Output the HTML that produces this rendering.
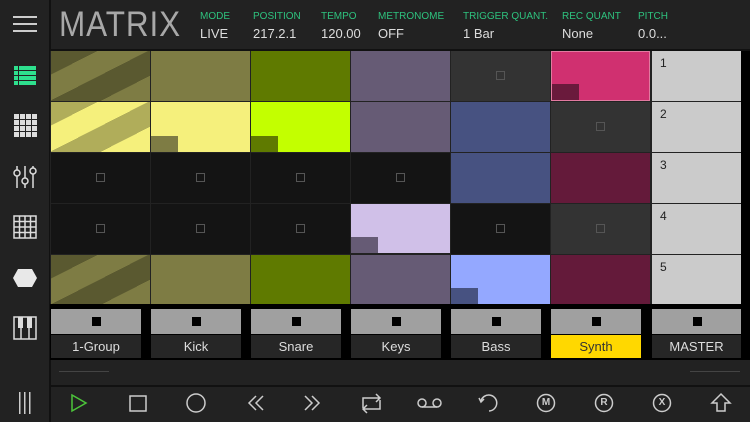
<!DOCTYPE html>
<html><head><meta charset="utf-8">
<style>
*{margin:0;padding:0;box-sizing:border-box}
body{width:750px;height:422px;overflow:hidden;background:#0a0a0a;font-family:"Liberation Sans",sans-serif;position:relative}
.a{position:absolute}
.lbl{position:absolute;top:11px;font-size:10px;color:#2ec27e;white-space:nowrap}
.val{position:absolute;top:26px;font-size:13px;color:#ddd;white-space:nowrap}
.c{position:absolute;width:99px;height:50px}
.sq{position:absolute;left:45px;top:20px;width:9px;height:9px;border:1px solid #555}
.mk{position:absolute;left:0;bottom:0;width:27px;height:16px}
.sc{position:absolute;left:652px;width:89px;height:50px;background:#cbcbcb;color:#222;font-size:12px;padding:5px 0 0 8px}
.tb{position:absolute;top:309px;width:90px;height:25px;background:#a0a0a0}
.tb i{position:absolute;left:41px;top:8px;width:9px;height:9px;background:#000}
.tl{position:absolute;top:335px;width:90px;height:23px;background:#262626;color:#ddd;font-size:13px;text-align:center;line-height:24px}
</style></head><body>
<div class="a" style="left:0;top:0;width:750px;height:49px;background:#222"></div>
<div class="a" style="left:0;top:49px;width:750px;height:2px;background:#111"></div>
<div class="a" style="left:0;top:0;width:49px;height:422px;background:#222"></div>
<div class="a" style="left:49px;top:0;width:2px;height:422px;background:#111"></div>
<div class="a" style="left:13px;top:16px;width:24px;height:2px;background:#ccc"></div>
<div class="a" style="left:13px;top:23px;width:24px;height:2px;background:#ccc"></div>
<div class="a" style="left:13px;top:30px;width:24px;height:2px;background:#ccc"></div>
<div class="a" style="left:59px;top:5px;font-size:35px;color:#a8a8a8;letter-spacing:1px;transform:scaleX(0.9);transform-origin:left">MATRIX</div>
<div class="lbl" style="left:200px">MODE</div><div class="val" style="left:200px">LIVE</div>
<div class="lbl" style="left:253px">POSITION</div><div class="val" style="left:253px">217.2.1</div>
<div class="lbl" style="left:321px">TEMPO</div><div class="val" style="left:321px">120.00</div>
<div class="lbl" style="left:378px">METRONOME</div><div class="val" style="left:378px">OFF</div>
<div class="lbl" style="left:463px">TRIGGER QUANT.</div><div class="val" style="left:463px">1 Bar</div>
<div class="lbl" style="left:562px">REC QUANT</div><div class="val" style="left:562px">None</div>
<div class="lbl" style="left:638px">PITCH</div><div class="val" style="left:638px">0.0...</div>
<svg class="a" style="left:0;top:50px" width="49" height="372">
 <g fill="#2ee08e">
  <rect x="14" y="16" width="4" height="4"/><rect x="19" y="16" width="17" height="4"/>
  <rect x="14" y="21" width="4" height="4"/><rect x="19" y="21" width="17" height="4"/>
  <rect x="14" y="26" width="4" height="4"/><rect x="19" y="26" width="17" height="4"/>
  <rect x="14" y="31" width="4" height="4"/><rect x="19" y="31" width="17" height="4"/>
 </g>
 <g fill="#ddd">
  <rect x="14" y="64" width="5" height="5"/><rect x="20" y="64" width="5" height="5"/><rect x="26" y="64" width="5" height="5"/><rect x="32" y="64" width="5" height="5"/>
  <rect x="14" y="70" width="5" height="5"/><rect x="20" y="70" width="5" height="5"/><rect x="26" y="70" width="5" height="5"/><rect x="32" y="70" width="5" height="5"/>
  <rect x="14" y="76" width="5" height="5"/><rect x="20" y="76" width="5" height="5"/><rect x="26" y="76" width="5" height="5"/><rect x="32" y="76" width="5" height="5"/>
  <rect x="14" y="82" width="5" height="5"/><rect x="20" y="82" width="5" height="5"/><rect x="26" y="82" width="5" height="5"/><rect x="32" y="82" width="5" height="5"/>
 </g>
 <g stroke="#ddd" stroke-width="1.5" fill="none">
  <line x1="17" y1="116" x2="17" y2="138"/><line x1="25" y1="116" x2="25" y2="138"/><line x1="33" y1="116" x2="33" y2="138"/>
  <circle cx="17" cy="123" r="3" fill="#222"/><circle cx="25" cy="131" r="3" fill="#222"/><circle cx="33" cy="121" r="3" fill="#222"/>
  <rect x="14" y="166" width="22" height="22"/>
  <line x1="14" y1="171.5" x2="36" y2="171.5"/><line x1="14" y1="177" x2="36" y2="177"/><line x1="14" y1="182.5" x2="36" y2="182.5"/>
  <line x1="19.5" y1="166" x2="19.5" y2="188"/><line x1="25" y1="166" x2="25" y2="188"/><line x1="30.5" y1="166" x2="30.5" y2="188"/>
  <rect x="14" y="267" width="22" height="22"/>
  <line x1="21" y1="278" x2="21" y2="289"/><line x1="29" y1="278" x2="29" y2="289"/>
 </g>
 <polygon points="18,219 32,219 37,228 32,237 18,237 13,228" fill="#e8e8e8"/>
 <g fill="#ddd"><rect x="18" y="267" width="5" height="11"/><rect x="27" y="267" width="5" height="11"/></g>
 <g fill="#ccc"><rect x="19" y="342" width="1.5" height="22"/><rect x="24" y="342" width="1.5" height="22"/><rect x="29" y="342" width="1.5" height="22"/></g>
</svg>
<div class="a" style="left:50px;top:51px;width:691px;height:254px;background:#222"></div>
<div class="a" style="left:741px;top:51px;width:9px;height:309px;background:#000"></div>
<div class="c" style="left:51px;top:51px;background:repeating-linear-gradient(153deg,#5a5930 0 21px,#7e7c44 21px 44px,#5a5930 44px 67px,#7e7c44 67px 90px)"></div>
<div class="c" style="left:151px;top:51px;background:#7e7c44"></div>
<div class="c" style="left:251px;top:51px;background:#5f7a00"></div>
<div class="c" style="left:351px;top:51px;background:#665b75"></div>
<div class="c" style="left:451px;top:51px;background:#333"><div class="sq"></div></div>
<div class="c" style="left:551px;top:51px;background:#d03070;border:1px solid #e27aa0"><div class="mk" style="background:#6a1a3c"></div></div>
<div class="sc" style="top:51px">1</div>
<div class="c" style="left:51px;top:102px;background:repeating-linear-gradient(153deg,#b0ad5a 0 21px,#f5f07c 21px 44px,#b0ad5a 44px 67px,#f5f07c 67px 90px)"></div>
<div class="c" style="left:151px;top:102px;background:#f5f07c"><div class="mk" style="background:#7e7c44"></div></div>
<div class="c" style="left:251px;top:102px;background:#c3ff00"><div class="mk" style="background:#5f7a00"></div></div>
<div class="c" style="left:351px;top:102px;background:#665b75"></div>
<div class="c" style="left:451px;top:102px;background:#475281"></div>
<div class="c" style="left:551px;top:102px;background:#333"><div class="sq"></div></div>
<div class="sc" style="top:102px">2</div>
<div class="c" style="left:51px;top:153px;background:#141414"><div class="sq"></div></div>
<div class="c" style="left:151px;top:153px;background:#141414"><div class="sq"></div></div>
<div class="c" style="left:251px;top:153px;background:#141414"><div class="sq"></div></div>
<div class="c" style="left:351px;top:153px;background:#141414"><div class="sq"></div></div>
<div class="c" style="left:451px;top:153px;background:#475281"></div>
<div class="c" style="left:551px;top:153px;background:#641a3a"></div>
<div class="sc" style="top:153px">3</div>
<div class="c" style="left:51px;top:204px;background:#141414"><div class="sq"></div></div>
<div class="c" style="left:151px;top:204px;background:#141414"><div class="sq"></div></div>
<div class="c" style="left:251px;top:204px;background:#141414"><div class="sq"></div></div>
<div class="c" style="left:351px;top:204px;background:#d0c0e8;height:49px"><div class="mk" style="background:#665b75"></div></div>
<div class="c" style="left:451px;top:204px;background:#141414"><div class="sq"></div></div>
<div class="c" style="left:551px;top:204px;background:#333"><div class="sq"></div></div>
<div class="sc" style="top:204px">4</div>
<div class="c" style="left:51px;top:255px;height:49px;background:repeating-linear-gradient(153deg,#5a5930 0 21px,#7e7c44 21px 44px,#5a5930 44px 67px,#7e7c44 67px 90px)"></div>
<div class="c" style="left:151px;top:255px;height:49px;background:#7e7c44"></div>
<div class="c" style="left:251px;top:255px;height:49px;background:#5f7a00"></div>
<div class="c" style="left:351px;top:255px;height:49px;background:#665b75"></div>
<div class="c" style="left:451px;top:255px;height:49px;background:#94a8ff"><div class="mk" style="background:#475281"></div></div>
<div class="c" style="left:551px;top:255px;height:49px;background:#641a3a"></div>
<div class="sc" style="top:255px;height:49px">5</div>
<div class="a" style="left:50px;top:304px;width:700px;height:56px;background:#000"></div>
<div class="tb" style="left:51px"><i></i></div><div class="tl" style="left:51px">1-Group</div>
<div class="tb" style="left:151px"><i></i></div><div class="tl" style="left:151px">Kick</div>
<div class="tb" style="left:251px"><i></i></div><div class="tl" style="left:251px">Snare</div>
<div class="tb" style="left:351px"><i></i></div><div class="tl" style="left:351px">Keys</div>
<div class="tb" style="left:451px"><i></i></div><div class="tl" style="left:451px">Bass</div>
<div class="tb" style="left:551px"><i></i></div><div class="tl" style="left:551px;background:#ffd800;color:#333">Synth</div>
<div class="tb" style="left:652px;width:89px"><i></i></div><div class="tl" style="left:652px;width:89px">MASTER</div>
<div class="a" style="left:51px;top:360px;width:699px;height:25px;background:#222"></div>
<div class="a" style="left:59px;top:371px;width:50px;height:1px;background:#444"></div>
<div class="a" style="left:690px;top:371px;width:50px;height:1px;background:#444"></div>
<div class="a" style="left:51px;top:385px;width:699px;height:2px;background:#111"></div>
<div class="a" style="left:51px;top:387px;width:699px;height:35px;background:#222"></div>
<svg class="a" style="left:0;top:387px" width="750" height="35" fill="none" stroke="#ccc" stroke-width="1.5">
 <polygon points="72,8 86,16 72,24" stroke="#4cc43a"/>
 <rect x="130" y="9" width="16" height="15"/>
 <circle cx="196" cy="16" r="9"/>
 <polyline points="256,9 249,16 256,23"/><polyline points="263,9 256,16 263,23"/>
 <polyline points="305,9 312,16 305,23"/><polyline points="312,9 319,16 312,23"/>
 <path d="M363,21 V11 H380 M376,7 l4,4 -4,4 M380,13 V22 H363 M367,18 l-4,4 4,4"/>
 <circle cx="422" cy="16" r="4"/><circle cx="437" cy="16" r="4"/><line x1="422" y1="20" x2="437" y2="20"/>
 <path d="M481,14 A8,8 0 1 1 489,24"/><path d="M479,11 L481,15 L484,12" />
 <circle cx="546" cy="16" r="8.5"/><circle cx="604" cy="16" r="8.5"/><circle cx="662" cy="16" r="8.5"/>
 <polygon points="721,7 730,16 725,16 725,24 717,24 717,16 712,16"/>
</svg>
<div class="a" style="left:538px;top:397px;width:16px;text-align:center;font-size:10px;color:#ccc;font-weight:bold">M</div>
<div class="a" style="left:596px;top:397px;width:16px;text-align:center;font-size:10px;color:#ccc;font-weight:bold">R</div>
<div class="a" style="left:654px;top:397px;width:16px;text-align:center;font-size:10px;color:#ccc;font-weight:bold">X</div>
</body></html>
